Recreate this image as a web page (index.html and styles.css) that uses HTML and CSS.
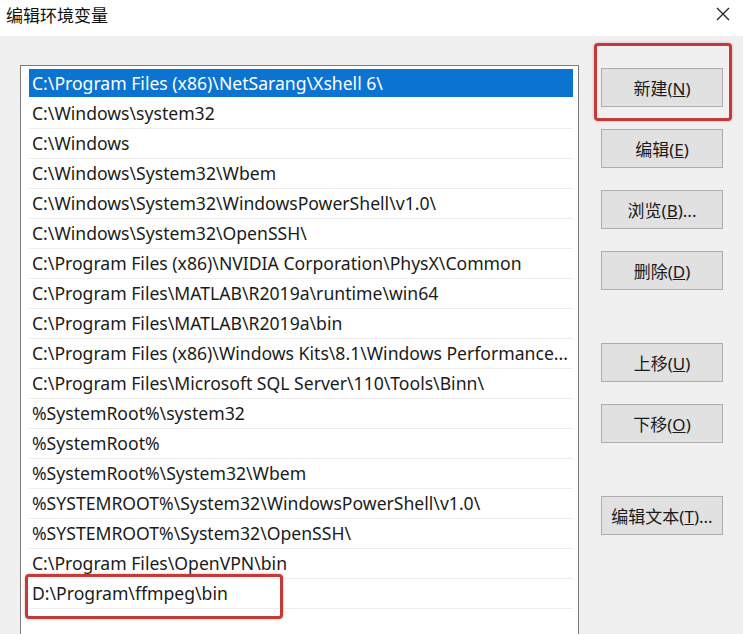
FILE: index.html
```html
<!DOCTYPE html>
<html lang="zh-CN">
<head>
<meta charset="utf-8">
<title>编辑环境变量</title>
<link rel="stylesheet" href="styles.css">
</head>
<body>
<div class="dialog">
  <header class="titlebar">
    <span class="title">编辑环境变量</span>
    <svg class="close" width="14" height="14" viewBox="0 0 14 14"><path d="M1 1 L13 13 M13 1 L1 13" stroke="#222" stroke-width="1.3" fill="none"/></svg>
  </header>
  <main class="content">
    <div class="listbox">
      <div class="row selected">C:\Program Files (x86)\NetSarang\Xshell 6\</div>
      <div class="row">C:\Windows\system32</div>
      <div class="row">C:\Windows</div>
      <div class="row">C:\Windows\System32\Wbem</div>
      <div class="row">C:\Windows\System32\WindowsPowerShell\v1.0\</div>
      <div class="row">C:\Windows\System32\OpenSSH\</div>
      <div class="row">C:\Program Files (x86)\NVIDIA Corporation\PhysX\Common</div>
      <div class="row">C:\Program Files\MATLAB\R2019a\runtime\win64</div>
      <div class="row">C:\Program Files\MATLAB\R2019a\bin</div>
      <div class="row">C:\Program Files (x86)\Windows Kits\8.1\Windows Performance...</div>
      <div class="row">C:\Program Files\Microsoft SQL Server\110\Tools\Binn\</div>
      <div class="row">%SystemRoot%\system32</div>
      <div class="row">%SystemRoot%</div>
      <div class="row">%SystemRoot%\System32\Wbem</div>
      <div class="row">%SYSTEMROOT%\System32\WindowsPowerShell\v1.0\</div>
      <div class="row">%SYSTEMROOT%\System32\OpenSSH\</div>
      <div class="row">C:\Program Files\OpenVPN\bin</div>
      <div class="row">D:\Program\ffmpeg\bin</div>
      <div class="row"></div>
      <div class="mark mark-row"></div>
    </div>
    <div class="buttons">
      <button class="btn">新建(<u>N</u>)</button>
      <button class="btn">编辑(<u>E</u>)</button>
      <button class="btn">浏览(<u>B</u>)...</button>
      <button class="btn">删除(<u>D</u>)</button>
      <button class="btn spaced">上移(<u>U</u>)</button>
      <button class="btn">下移(<u>O</u>)</button>
      <button class="btn spaced">编辑文本(<u>T</u>)...</button>
      <div class="mark mark-btn"></div>
    </div>
  </main>
</div>
</body>
</html>
```

FILE: styles.css
```css
html, body {
  margin: 0;
  padding: 0;
  height: 100%;
  overflow: hidden;
}
body {
  font-family: "Noto Sans", "Noto Sans CJK SC", sans-serif;
  color: #1a1a1a;
  background: #f0f0f0;
}
.dialog {
  width: 743px;
  height: 634px;
  display: flex;
  flex-direction: column;
}
.titlebar {
  height: 36px;
  flex: none;
  background: #ffffff;
  display: flex;
  align-items: center;
  justify-content: space-between;
  padding: 0 13px 0 6px;
  box-sizing: border-box;
}
.title {
  font-size: 17px;
  margin-top: -8px;
  color: #111;
}
.close {
  margin-top: -9px;
}
.content {
  flex: 1;
  background: #f0f0f0;
  display: flex;
  padding: 29px 0 0 20px;
  min-height: 0;
}
.listbox {
  position: relative;
  width: 559px;
  height: 600px;
  flex: none;
  background: #ffffff;
  border: 1px solid #7a7a7a;
  padding: 3px 5px 0 8px;
  box-sizing: border-box;
}
.row {
  box-sizing: border-box;
  height: 30px;
  line-height: 29px;
  font-size: 17.6px;
  padding-left: 3px;
  border-bottom: 1px solid #ededed;
  white-space: nowrap;
  color: #1b1b1b;
}
.row.selected {
  background: #0a74d0;
  color: #ffffff;
  border-bottom: 2px solid #ffffff;
  line-height: 28px;
}
.buttons {
  position: relative;
  margin-left: 22px;
  padding-top: 3px;
  display: flex;
  flex-direction: column;
  gap: 22px;
}
.btn {
  width: 122px;
  height: 39px;
  background: #e1e1e1;
  border: 1px solid #adadad;
  font-family: "Noto Sans", "Noto Sans CJK SC", sans-serif;
  font-size: 17px;
  color: #1a1a1a;
  padding: 0;
}
.btn.spaced {
  margin-top: 31px;
}
.mark {
  position: absolute;
  border: 3px solid #c23a3a;
  border-radius: 4px;
  box-shadow: 0 0 3px rgba(194, 58, 58, 0.4);
}
.mark-btn {
  left: -7px;
  top: -22px;
  width: 132px;
  height: 72px;
}
.mark-row {
  left: 4px;
  top: 508px;
  width: 252px;
  height: 39px;
}
```
